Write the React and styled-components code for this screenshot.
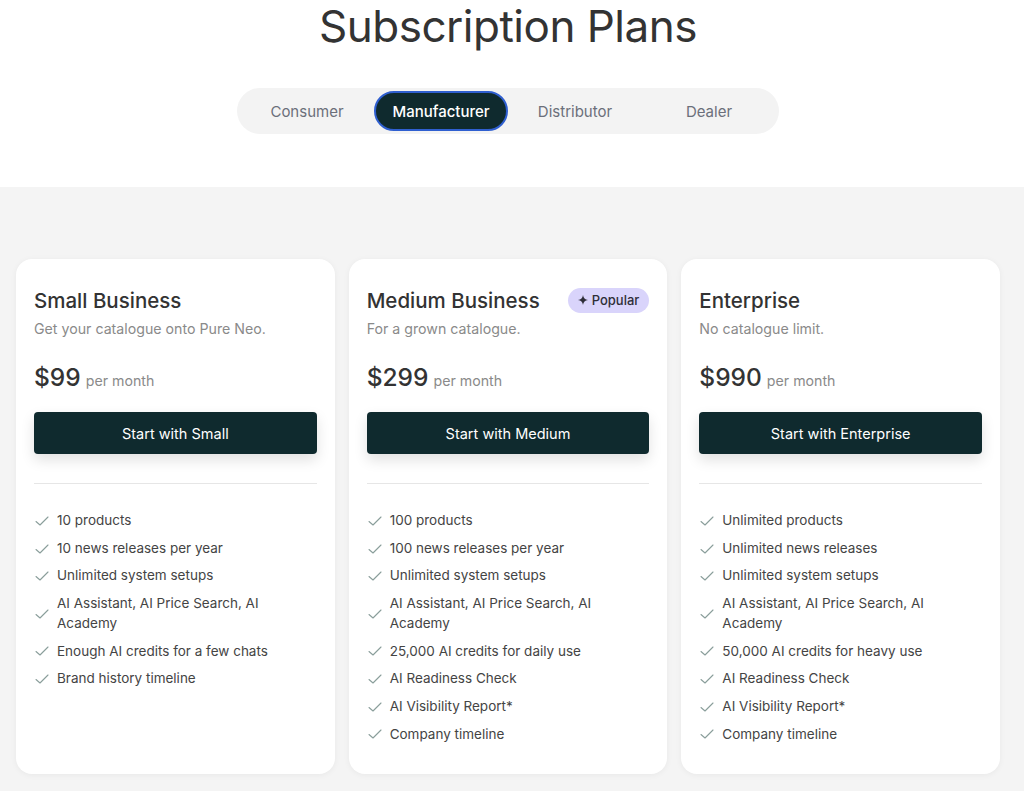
import React, { useState } from "react";
import styled, { createGlobalStyle } from "styled-components";

const GlobalStyle = createGlobalStyle`
  html, body {
    margin: 0;
    padding: 0;
    background: #ffffff;
    font-family: Inter, "Noto Sans", sans-serif;
    color: #333333;
  }
  * { box-sizing: border-box; }
`;

const Header = styled.header`
  display: flex;
  flex-direction: column;
  align-items: center;
  height: 187px;
  padding-right: 8px;
  background: #ffffff;
`;

const Title = styled.h1`
  margin: 0;
  font-size: 44px;
  line-height: 52px;
  font-weight: 400;
  color: #333333;
  letter-spacing: -0.5px;
`;

const Tabs = styled.div`
  display: flex;
  margin-top: 36px;
  padding: 3px;
  background: #f3f3f3;
  border-radius: 999px;
`;

const Tab = styled.button`
  width: 134px;
  height: 40px;
  border-radius: 999px;
  font-family: inherit;
  font-size: 15px;
  cursor: pointer;
  border: 2px solid ${(p) => (p.$active ? "#2f5fd0" : "transparent")};
  background: ${(p) => (p.$active ? "#0f2a2e" : "transparent")};
  color: ${(p) => (p.$active ? "#ffffff" : "#6b6f7a")};
  font-weight: ${(p) => (p.$active ? 500 : 400)};
`;

const Section = styled.section`
  background: #f4f4f4;
  padding: 72px 24px 19px 16px;
  min-height: 604px;
`;

const Grid = styled.div`
  display: grid;
  grid-template-columns: repeat(3, 1fr);
  gap: 14px;
`;

const Card = styled.div`
  background: #ffffff;
  border-radius: 16px;
  padding: 28px 18px 30px;
  min-height: 513px;
  box-shadow: 0 1px 6px rgba(0, 0, 0, 0.05);
`;

const TitleRow = styled.div`
  display: flex;
  align-items: center;
  justify-content: space-between;
  height: 26px;
`;

const PlanName = styled.h2`
  margin: 0;
  font-size: 20.5px;
  font-weight: 500;
  color: #333333;
`;

const Badge = styled.span`
  display: inline-flex;
  align-items: center;
  gap: 4px;
  height: 25px;
  padding: 0 10px;
  border-radius: 999px;
  background: #d9d4fb;
  color: #2e2e38;
  font-size: 13px;
  font-weight: 500;
`;

const Subtitle = styled.p`
  margin: 6px 0 0;
  font-size: 14.2px;
  color: #8a8a8a;
  line-height: 20px;
`;

const Price = styled.div`
  display: flex;
  align-items: baseline;
  gap: 5px;
  margin-top: 23px;
`;

const Amount = styled.span`
  font-size: 24.5px;
  font-weight: 500;
  color: #333333;
`;

const Per = styled.span`
  font-size: 14.2px;
  color: #8a8a8a;
`;

const CtaButton = styled.button`
  display: block;
  width: 100%;
  height: 42px;
  margin-top: 20px;
  border: none;
  border-radius: 4px;
  background: #0f2a2e;
  color: #ffffff;
  font-family: inherit;
  font-size: 14.5px;
  font-weight: 400;
  cursor: pointer;
  box-shadow: 0 6px 14px rgba(0, 0, 0, 0.12);
`;

const Divider = styled.hr`
  border: none;
  border-top: 1px solid #e6e6e6;
  margin: 29px 0 27px;
`;

const Features = styled.ul`
  list-style: none;
  margin: 0;
  padding: 0;
  display: flex;
  flex-direction: column;
  gap: 8px;
`;

const Feature = styled.li`
  display: flex;
  align-items: center;
  gap: 7px;
  font-size: 13.5px;
  line-height: 19.7px;
  color: #444444;
  padding-right: 40px;
`;

const CheckIcon = () => (
  <svg width="16" height="16" viewBox="0 0 16 16" fill="none" style={{ flexShrink: 0 }}>
    <path d="M2 8.5l4 3.5 8-8" stroke="#8a9e9b" strokeWidth="1.1" strokeLinecap="round" strokeLinejoin="round" />
  </svg>
);

const Sparkle = () => (
  <svg width="10" height="10" viewBox="0 0 10 10">
    <path d="M5 0C5.4 3 7 4.6 10 5 7 5.4 5.4 7 5 10 4.6 7 3 5.4 0 5 3 4.6 4.6 3 5 0Z" fill="#2e2e38" />
  </svg>
);

const plans = [
  {
    name: "Small Business",
    subtitle: "Get your catalogue onto Pure Neo.",
    price: "$99",
    cta: "Start with Small",
    features: [
      "10 products",
      "10 news releases per year",
      "Unlimited system setups",
      "AI Assistant, AI Price Search, AI Academy",
      "Enough AI credits for a few chats",
      "Brand history timeline",
    ],
  },
  {
    name: "Medium Business",
    subtitle: "For a grown catalogue.",
    price: "$299",
    cta: "Start with Medium",
    popular: true,
    features: [
      "100 products",
      "100 news releases per year",
      "Unlimited system setups",
      "AI Assistant, AI Price Search, AI Academy",
      "25,000 AI credits for daily use",
      "AI Readiness Check",
      "AI Visibility Report*",
      "Company timeline",
    ],
  },
  {
    name: "Enterprise",
    subtitle: "No catalogue limit.",
    price: "$990",
    cta: "Start with Enterprise",
    features: [
      "Unlimited products",
      "Unlimited news releases",
      "Unlimited system setups",
      "AI Assistant, AI Price Search, AI Academy",
      "50,000 AI credits for heavy use",
      "AI Readiness Check",
      "AI Visibility Report*",
      "Company timeline",
    ],
  },
];

const tabs = ["Consumer", "Manufacturer", "Distributor", "Dealer"];

export default function App() {
  const [active, setActive] = useState("Manufacturer");
  return (
    <>
      <GlobalStyle />
      <Header>
        <Title>Subscription Plans</Title>
        <Tabs>
          {tabs.map((t) => (
            <Tab key={t} $active={t === active} onClick={() => setActive(t)}>
              {t}
            </Tab>
          ))}
        </Tabs>
      </Header>
      <Section>
        <Grid>
          {plans.map((p) => (
            <Card key={p.name}>
              <TitleRow>
                <PlanName>{p.name}</PlanName>
                {p.popular && (
                  <Badge>
                    <Sparkle /> Popular
                  </Badge>
                )}
              </TitleRow>
              <Subtitle>{p.subtitle}</Subtitle>
              <Price>
                <Amount>{p.price}</Amount>
                <Per>per month</Per>
              </Price>
              <CtaButton>{p.cta}</CtaButton>
              <Divider />
              <Features>
                {p.features.map((f) => (
                  <Feature key={f}>
                    <CheckIcon />
                    <span>{f}</span>
                  </Feature>
                ))}
              </Features>
            </Card>
          ))}
        </Grid>
      </Section>
    </>
  );
}
